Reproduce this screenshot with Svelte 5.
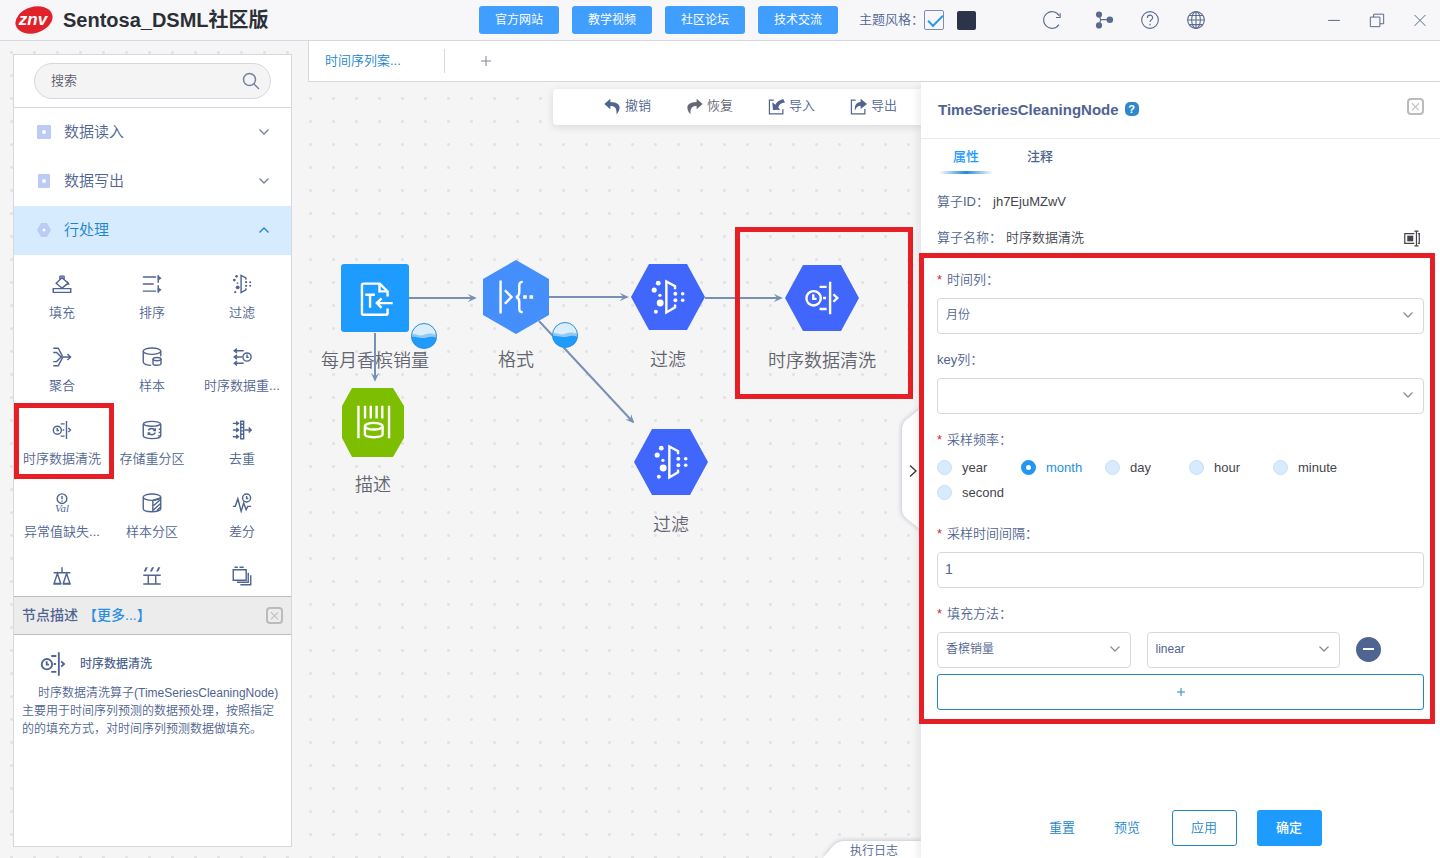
<script lang="ts">
  type GraphNode = { id: string; label: string; icon: string; shape: string; x: number; y: number };

  const links = ['官方网站', '教学视频', '社区论坛', '技术交流'];

  const tools = [
    { icon: 'fill', label: '填充' },
    { icon: 'sort', label: '排序' },
    { icon: 'filter', label: '过滤' },
    { icon: 'merge', label: '聚合' },
    { icon: 'sample', label: '样本' },
    { icon: 'resample', label: '时序数据重...' },
    { icon: 'clean', label: '时序数据清洗', marked: true },
    { icon: 'store', label: '存储重分区' },
    { icon: 'dedupe', label: '去重' },
    { icon: 'outlier', label: '异常值缺失...' },
    { icon: 'partition', label: '样本分区' },
    { icon: 'diff', label: '差分' },
    { icon: 'balance', label: '' },
    { icon: 'shuffle', label: '' },
    { icon: 'stack', label: '' }
  ];

  const actions = [
    { icon: 'undo', label: '撤销' },
    { icon: 'redo', label: '恢复' },
    { icon: 'import', label: '导入' },
    { icon: 'export', label: '导出' }
  ];

  // node centres on the canvas
  const nodes: GraphNode[] = [
    { id: 'src', label: '每月香槟销量', icon: 'text', shape: 'square', x: 67, y: 216 },
    { id: 'fmt', label: '格式', icon: 'format', shape: 'hexTall', x: 208, y: 215 },
    { id: 'flt1', label: '过滤', icon: 'filter', shape: 'hex', x: 360, y: 215 },
    { id: 'cln', label: '时序数据清洗', icon: 'clean', shape: 'hex', x: 514, y: 216 },
    { id: 'dsc', label: '描述', icon: 'describe', shape: 'oct', x: 65, y: 340 },
    { id: 'flt2', label: '过滤', icon: 'filter', shape: 'hex', x: 363, y: 380 }
  ];

  const shapes: Record<string, { color: string; d: string }> = {
    square: { color: '#1e9bff', d: 'M6 3h62a3 3 0 0 1 3 3v62a3 3 0 0 1-3 3H6a3 3 0 0 1-3-3V6a3 3 0 0 1 3-3z' },
    hexTall: { color: '#458ffc', d: 'M37 0L70 19V55L37 74L4 55V19z' },
    hex: { color: '#4166fb', d: 'M18 4H56L74 37L56 70H18L0 37z' },
    oct: { color: '#7dbe00', d: 'M16 3H57L68 21V53L57 72H16L6 53V21z' }
  };

  const edges = [
    'M101 216L167 216',
    'M241 215L319 215',
    'M397 216L473 216',
    'M67 251L67 298',
    'M231 239L325 340'
  ];

  const badges = [
    { x: 116, y: 254 },
    { x: 257, y: 253 }
  ];

  const frequencies = ['year', 'month', 'day', 'hour', 'minute', 'second'];

  let theme = $state(true);
  let search = $state('');
  let frequency = $state('month');
  let interval = $state('1');
</script>

{#snippet chevron(dir: string)}
  <svg class="chevron" viewBox="0 0 12 12" aria-hidden="true">
    <path d={dir === 'up' ? 'M1.500 8.500L6 4L10.500 8.500' : dir === 'right' ? 'M3 0.500L9 6L3 11.500' : 'M1.500 3.500L6 8L10.500 3.500'} />
  </svg>
{/snippet}

{#snippet icon(name: string)}
  <svg class="icon" viewBox="0 0 24 24" aria-hidden="true">
    {#if name === 'fill'}
      <path d="M1.500 17.500h21v4.500h-21zM5 11l7-6.500 7.500 6.500L12 17zM9 2.500h6M9.500 2.500V7M14.500 2.500v4" />
      <path class="solid" d="M18 8l3.500 5h-3.500z" />
    {:else if name === 'sort'}
      <path d="M1 3.500h16M1 12h13M1 20.500h16M19.500 1.500v9M19.500 13.500v9" />
      <path class="solid" d="M19 1.500l4.500 3.500-4.500 3zM19 16l4.500 3-4.500 3.500z" />
    {:else if name === 'filter'}
      <g class="solid">
        <circle cx="5.500" cy="2.800" r="1.600" />
        <circle cx="2.800" cy="7.300" r="1.700" />
        <circle cx="6.600" cy="10.900" r="1.100" />
        <circle cx="6.800" cy="16" r="2.300" />
        <circle cx="3.900" cy="21.800" r="1.300" />
        <circle cx="16.900" cy="9.800" r="1.300" />
        <circle cx="16.900" cy="14.200" r="1.300" />
        <circle cx="21.800" cy="9.800" r="1.200" />
        <circle cx="21.800" cy="14.200" r="1.200" />
      </g>
      <path d="M16.700 6.800V4.800L10.900 1.700V22.300L16.700 18.900V17" />
    {:else if name === 'merge'}
      <path d="M1.500 1.500h6L12.500 11M1.500 6.500h4L11 12M1.500 17.500h4L11 12M1.500 22.500h6L12.500 13M11 12h11M18.500 8.500L22.300 12l-3.800 3.500" />
    {:else if name === 'sample'}
      <ellipse cx="12" cy="5" rx="10.500" ry="3.800" />
      <path d="M1.500 5v13c0 2 4 4 9.500 4M22.500 5v6" />
      <ellipse cx="18" cy="14.500" rx="4.800" ry="1.900" />
      <path d="M13.200 14.500v5.500c0 2.600 9.600 2.600 9.600 0v-5.500" />
    {:else if name === 'resample'}
      <path d="M2 4.500h12M2 12h10M2 19.500h12M6 2L2.800 4.500 6 7M6 9.500L2.800 12 6 14.500M6 17L2.800 19.500 6 22" />
      <circle cx="18" cy="12" r="4.900" />
      <path d="M18 9v3.300h2" />
    {:else if name === 'clean'}
      <circle cx="6.400" cy="12.200" r="4.800" />
      <path d="M6.200 9.500v3.100h2.200M10.400 4.600h4.700M12.700 12h2M10.400 19.300h4.700M17.400 1.200v21.600M19.600 9.500L22.200 12l-2.600 2.500" />
    {:else if name === 'store'}
      <path d="M1.500 5c0-4.500 21-4.500 21 0v14c0 4.500-21 4.500-21 0zM2 5c2 3.200 17 3.200 20 0M20 11h2.500M20 15h2.500M19 19h3" />
      <path d="M7.500 12.500c1.500-3.200 6.500-3.200 8 0M16 15c-1.500 3.500-6.500 3.500-8 .5M16 10v2.500h-2.500M7.500 18v-2.500h2.500" />
    {:else if name === 'dedupe'}
      <path d="M1 4h6M1 12h6M1 20h6M15 12h8M5 1.800L7.800 4 5 6.200M5 9.800L7.800 12 5 14.200M5 17.800L7.800 20 5 22.200M20 9l3 3-3 3" />
      <path d="M10.500 1.500h3.500v21h-3.500zM10.500 5h3M10.500 9h3M10.500 13h3M10.500 17h3" />
    {:else if name === 'outlier'}
      <circle cx="12" cy="6.800" r="5.800" />
      <path d="M12 3.500v4M12 9v1.500" />
      <text x="12" y="23" text-anchor="middle">Val</text>
    {:else if name === 'partition'}
      <ellipse cx="12" cy="5" rx="10.500" ry="3.800" />
      <path d="M1.500 5v14c0 2 4 3.500 10.500 3.500S22.500 21 22.500 19V5M13 9v13.500M13 9l9-3M14 15l8-7M14 20l8-7M18 21l4-4" />
    {:else if name === 'diff'}
      <path d="M1 16h3l3-9 4 15 3-10 3 8 2-4h4" />
      <circle cx="17.500" cy="6" r="4.800" />
      <path d="M17.500 3.500v3h2" />
    {:else if name === 'balance'}
      <path d="M2 8h20M12 1.500v7M6.500 9L2.500 21h8zM17.500 9l-4 12h8zM1.500 21.500h9.500M13 21.500h9.500" />
    {:else if name === 'shuffle'}
      <path d="M1.500 11h21M1.500 21.500h21M7.500 11v10.500M16.500 11v10.500" />
      <path class="solid" d="M2 6.500l2.500-5h2.500l-2.500 5zM9.500 6.500l2.500-5h2.500l-2.500 5zM17 6.500l2.500-5h2.500l-2.500 5z" />
    {:else if name === 'stack'}
      <path d="M1.500 4.500h15.500v12.500h-15.500zM3 1.500h4M9 1.500h5M19.500 8v11.500H6M22.500 11v11.500H10" />
    {:else if name === 'text'}
      <path d="M20.400 19v3.200a1 1 0 0 1-1 1H4.300a1 1 0 0 1-1-1V3.400a1 1 0 0 1 1-1h10.900l5.200 5.200V11M15 2.800v4.800h5.200M5.500 9.800h6.400M8.700 9.800v8.700M13.500 15.400h10.300M16.400 12.200l-3.200 3.200 3.200 3.200" />
    {:else if name === 'format'}
      <path d="M1.700 1v22M4.600 7.500L9 12l-4.400 4.500M16.500 1.900c-2 0-2.300.8-2.300 2.500v4.400c0 1.800-.6 2.800-2.200 3.200 1.600.4 2.200 1.400 2.200 3.200v4.400c0 1.700.3 2.500 2.300 2.500" />
      <path class="solid" d="M16.800 10.800h2.400v2.400h-2.400zM21 10.800h2.400v2.400H21z" />
    {:else if name === 'describe'}
      <path d="M2.300 1.200v21.600M22.700 1.200v21.600M6.700 1.200v8.400M10.500 1.200v8.400M14.400 1.200v8.400M18.200 1.200v8.400M6.600 15v5.200c0 2.600 11.800 2.600 11.800 0V15" />
      <ellipse cx="12.500" cy="14.800" rx="5.900" ry="2.200" />
    {:else if name === 'undo'}
      <path class="solid" d="M9 1L0.500 8.500 9 16v-4.800c6.500 0 9.500 3.300 8.500 11.800C25 15 24 6 9 5.800z" />
    {:else if name === 'redo'}
      <path class="solid" d="M15 1l8.500 7.500L15 16v-4.800c-6.500 0-9.500 3.300-8.500 11.800C-1 15 0 6 15 5.800z" />
    {:else if name === 'import'}
      <path d="M8 3H2v19.500h19v-7" />
      <path class="solid" d="M6 6l1 11 10.500-.5-3-3c1-4 4-6.500 9.500-7l-2.500-5c-5.500 1.500-9.500 4-11 8z" />
    {:else if name === 'export'}
      <path d="M8 3H2v19.500h19v-7" />
      <path class="solid" d="M15 1l9 7.500-9 7v-4.500c-4 0-6.500 2-8 7C6 10.500 9 6 15 5.500z" />
    {:else if name === 'refresh'}
      <path d="M20.300 17.500A10 10 0 1 1 20.500 6.800M21.800 4v5h-5" />
    {:else if name === 'branch'}
      <path d="M6 5.500L8 12M6 18.500L8 12M8 11.500L20 11.500" />
      <g class="solid">
        <circle cx="6" cy="5.500" r="3.700" />
        <circle cx="6" cy="18.500" r="3.700" />
        <circle cx="19" cy="11.800" r="3.900" />
      </g>
    {:else if name === 'help'}
      <circle cx="12" cy="12" r="10" />
      <path d="M8.800 9.500c0-4.500 6.600-4.300 6.400-.2 0 2.400-3.200 2.600-3.200 5M12 16.500v2" />
    {:else if name === 'globe'}
      <circle cx="12" cy="12" r="10" />
      <ellipse cx="12" cy="12" rx="5.200" ry="10" />
      <path d="M12 2v20M2 12h20M3.500 6.500h17M3.500 17.500h17" />
    {:else if name === 'minimize'}
      <path d="M5 12.500h14" />
    {:else if name === 'restore'}
      <path d="M4 8.500h11.500V20H4zM8 8.500V5h12v11.500h-4.500" />
    {:else if name === 'close'}
      <path d="M5.500 6l13 13M18.500 6l-13 13" />
    {:else if name === 'rename'}
      <path d="M16 5H2.500v14H16M19 2v20M16 1.500h6M16 22.500h6M21 5h2v14h-2" />
      <path class="solid" d="M6 8h8.500v8H6z" />
    {/if}
  </svg>
{/snippet}

<div class="app">
  <header class="topbar">
    <div class="brand">
      <svg class="logo" viewBox="0 0 40 30" role="img" aria-label="znv">
        <ellipse cx="20" cy="15" rx="19" ry="13" transform="rotate(-17 20 15)" />
        <text x="19" y="20" text-anchor="middle">znv</text>
      </svg>
      <h1>Sentosa_DSML社区版</h1>
    </div>
    <nav class="links">
      {#each links as link}
        <a href="#top">{link}</a>
      {/each}
    </nav>
    <div class="theme">
      <label for="theme">主题风格：</label>
      <input id="theme" type="checkbox" bind:checked={theme} />
      <button class="swatch" aria-label="深色"></button>
    </div>
    <div class="icons">
      <button class="refresh" aria-label="刷新">{@render icon('refresh')}</button>
      <button aria-label="分支">{@render icon('branch')}</button>
      <button aria-label="帮助">{@render icon('help')}</button>
      <button aria-label="语言">{@render icon('globe')}</button>
    </div>
    <div class="window">
      <button aria-label="最小化">{@render icon('minimize')}</button>
      <button aria-label="还原">{@render icon('restore')}</button>
      <button aria-label="关闭">{@render icon('close')}</button>
    </div>
  </header>

  <div class="body">
    <aside class="sidebar">
      <div class="search">
        <input type="text" placeholder="搜索" aria-label="搜索" bind:value={search} />
        <svg viewBox="0 0 18 18" aria-hidden="true"><circle cx="7.500" cy="7.500" r="6" /><path d="M12 12l5 5" /></svg>
      </div>
      <div class="tree">
        <button class="category">
          <svg class="kind" viewBox="0 0 14 14" aria-hidden="true"><rect width="14" height="14" rx="1" /><circle cx="7" cy="7" r="2" /></svg>
          <span>数据读入</span>{@render chevron('down')}
        </button>
        <button class="category">
          <svg class="kind" viewBox="0 0 14 14" aria-hidden="true"><rect x="1" width="12" height="14" rx="1" /><circle cx="7" cy="7" r="2" /></svg>
          <span>数据写出</span>{@render chevron('down')}
        </button>
        <button class="category open">
          <svg class="kind" viewBox="0 0 14 14" aria-hidden="true"><path d="M4 0h6l4 7-4 7H4L0 7z" /><circle cx="7" cy="7" r="1.500" /></svg>
          <span>行处理</span>{@render chevron('up')}
        </button>
        <div class="tools">
          {#each tools as tool}
            <button class="tool" class:marked={tool.marked} aria-label={tool.label || tool.icon}>
              {@render icon(tool.icon)}
              {#if tool.label}<span>{tool.label}</span>{/if}
            </button>
          {/each}
        </div>
      </div>
      <section class="about">
        <header>
          <h2>节点描述</h2>
          <a href="#more">【更多...】</a>
          <button class="close" aria-label="关闭">{@render icon('close')}</button>
        </header>
        <div class="about-body">
          <h3>{@render icon('clean')}时序数据清洗</h3>
          <p>时序数据清洗算子(TimeSeriesCleaningNode)主要用于时间序列预测的数据预处理，按照指定的的填充方式，对时间序列预测数据做填充。</p>
        </div>
      </section>
    </aside>

    <main>
      <div class="tabbar">
        <button class="tab">时间序列案...</button>
        <button class="add-tab" aria-label="新建">
          <svg viewBox="0 0 12 12" aria-hidden="true"><path d="M6 1v10M1 6h10" /></svg>
        </button>
      </div>
      <div class="stage">
        <div class="canvas">
          <div class="actions">
            {#each actions as action}
              <button class={action.icon}>{@render icon(action.icon)}{action.label}</button>
            {/each}
          </div>

          {#each nodes as node (node.id)}
            <div class="node" style="left: {node.x}px; top: {node.y}px">
              <div class="shape">
                <svg viewBox="0 0 74 74" aria-hidden="true"><path d={shapes[node.shape].d} fill={shapes[node.shape].color} /></svg>
                {@render icon(node.icon)}
              </div>
              <span>{node.label}</span>
            </div>
          {/each}

          <svg class="edges" aria-hidden="true">
            <defs>
              <marker id="arrow" viewBox="0 0 10 10" refX="8" refY="5" markerWidth="9" markerHeight="9" markerUnits="userSpaceOnUse" orient="auto">
                <path d="M0 0.500L10 5L0 9.500L4 5z" fill="#7890b4" />
              </marker>
            </defs>
            {#each edges as d}
              <path {d} marker-end="url(#arrow)" />
            {/each}
          </svg>

          {#each badges as badge}
            <svg class="badge" style="left: {badge.x}px; top: {badge.y}px" viewBox="0 0 28 28" aria-hidden="true">
              <circle cx="14" cy="14" r="12.500" fill="#d9edfb" />
              <path d="M1.500 13c4-3 7 2 12 0s8-2 13 0v5h-25z" fill="#92c9f3" />
              <path d="M1.500 15c4-1 7 1 11 1s9-3 14 0c-.5 14-24.500 14-25-1z" fill="#1e9bff" />
              <circle cx="14" cy="14" r="12.500" fill="none" stroke="#2d8fd8" />
            </svg>
          {/each}

          <div class="highlight"></div>

          <button class="handle" aria-label="收起">
            <svg class="bump" viewBox="0 0 20 124" aria-hidden="true"><path d="M20 1L5 13Q1 17 1 22V102Q1 107 5 111L20 123z" /></svg>
            {@render chevron('right')}
          </button>
          <button class="log">
            <svg viewBox="0 0 98 18" aria-hidden="true"><path d="M0 18L10 6Q15 1 21 1H98V18z" /></svg>
            <span>执行日志</span>
          </button>
        </div>

        <section class="panel">
          <header>
            <h2>TimeSeriesCleaningNode</h2>
            <span class="hint">?</span>
            <button class="close" aria-label="关闭">{@render icon('close')}</button>
          </header>
          <div class="tabs">
            <button class="active">属性</button>
            <button>注释</button>
          </div>
          <div class="info"><span>算子ID：</span>jh7EjuMZwV</div>
          <div class="info">
            <span>算子名称：</span>时序数据清洗
            <button aria-label="重命名">{@render icon('rename')}</button>
          </div>

          <form class="params">
            <div class="field">
              <label class="required" for="time">时间列：</label>
              <div class="select"><select id="time"><option>月份</option></select>{@render chevron('down')}</div>
            </div>
            <div class="field">
              <label for="key">key列：</label>
              <div class="select"><select id="key"><option></option></select>{@render chevron('down')}</div>
            </div>
            <fieldset>
              <legend class="required">采样频率：</legend>
              <div class="radios">
                {#each frequencies as freq}
                  <label><input type="radio" name="frequency" value={freq} bind:group={frequency} />{freq}</label>
                {/each}
              </div>
            </fieldset>
            <div class="field">
              <label class="required" for="interval">采样时间间隔：</label>
              <input id="interval" type="text" bind:value={interval} />
            </div>
            <div class="field last">
              <label class="required" for="column">填充方法：</label>
              <div class="pair">
                <div class="select"><select id="column"><option>香槟销量</option></select>{@render chevron('down')}</div>
                <div class="select"><select aria-label="方法"><option>linear</option></select>{@render chevron('down')}</div>
                <div class="remove-cell"><button type="button" class="remove" aria-label="删除"></button></div>
              </div>
            </div>
            <button type="button" class="add" aria-label="添加">
              <svg viewBox="0 0 10 10" aria-hidden="true"><path d="M5 1v8M1 5h8" /></svg>
            </button>
          </form>

          <footer>
            <button>重置</button>
            <button>预览</button>
            <button class="outline">应用</button>
            <button class="primary">确定</button>
          </footer>
        </section>
      </div>
    </main>
  </div>
</div>

<style>
:global(body) {
  margin: 0;
}
.app, .app * {
  box-sizing: border-box;
}
.app {
  --ink: #4f6490;
  --blue: #1e9bff;
  --line: #d5d8de;
  --red: #e61e25;
  display: flex;
  flex-direction: column;
  height: 100vh;
  font: 350 13px/20px "Liberation Sans", "Noto Sans CJK SC", sans-serif;
  color: var(--ink);
  background: #f5f5f5;
}
button {
  padding: 0;
  border: 0;
  background: none;
  font: inherit;
  color: inherit;
  cursor: pointer;
}
a {
  text-decoration: none;
}
h1, h2, h3, p {
  margin: 0;
}
svg {
  display: block;
  flex: none;
}
.icon {
  width: 20px;
  height: 20px;
  fill: none;
  stroke: currentColor;
  stroke-width: 1.7;
}
.icon .solid {
  fill: currentColor;
  stroke: none;
}
.icon text {
  font: italic 400 13px "Liberation Serif", serif;
  fill: currentColor;
  stroke: none;
}
.chevron {
  width: 12px;
  height: 12px;
  fill: none;
  stroke: currentColor;
  stroke-width: 1.3;
}
.close {
  width: 17px;
  height: 17px;
  border: 2px solid #bdbabd;
  border-radius: 4px;
  color: #c3bfc2;
}
.close .icon {
  width: 13px;
  height: 13px;
  stroke-width: 2;
}

/* top bar */
.topbar {
  display: flex;
  align-items: center;
  height: 41px;
  flex: none;
  padding: 0 10px 0 14px;
  background: #f7f7fa;
  border-bottom: 1px solid var(--line);
}
.brand {
  display: flex;
  align-items: center;
  gap: 9px;
  flex: 1;
}
.logo {
  width: 40px;
  height: 30px;
  fill: #e0222b;
}
.logo text {
  font: italic 700 17px "Liberation Sans", sans-serif;
  fill: #fff;
}
h1 {
  font-size: 20px;
  font-weight: 700;
  line-height: 28px;
  color: #2c3036;
}
.links {
  display: flex;
  gap: 13px;
}
.links a {
  width: 80px;
  border-radius: 3px;
  background: #409eff;
  color: #fff;
  font-size: 12px;
  font-weight: 400;
  line-height: 28px;
  text-align: center;
}
.theme {
  display: flex;
  align-items: center;
  margin: 0 66px 0 21px;
}
.theme input {
  appearance: none;
  width: 20px;
  height: 20px;
  margin: 0;
  border: 1px solid #7d8db0;
  border-radius: 2px;
}
.theme input:checked::before {
  content: "";
  display: block;
  width: 13px;
  height: 6px;
  margin: 4px 0 0 3px;
  border: solid #2a9be8;
  border-width: 0 0 2px 2px;
  transform: rotate(-45deg);
}
.swatch {
  width: 19px;
  height: 19px;
  margin-left: 13px;
  border-radius: 2px;
  background: #2b3448;
}
.icons {
  display: flex;
  gap: 26px;
  color: #5a6a8c;
}
.icons .icon {
  stroke-width: 1.3;
}
.refresh {
  margin-right: 6px;
}
.window {
  display: flex;
  gap: 23px;
  margin-left: 118px;
  color: #5a6a8c;
}
.window .icon {
  stroke-width: 1.2;
}

.body {
  display: flex;
  gap: 16px;
  flex: 1;
  min-height: 0;
  background-image: radial-gradient(circle, #e2e2e2 1px, transparent 2px);
  background-size: 23px 23px;
}

/* sidebar */
.sidebar {
  display: flex;
  flex-direction: column;
  flex: 0 0 279px;
  margin: 13px 0 11px 13px;
  background: #fff;
  border: 1px solid var(--line);
}
.search {
  position: relative;
  padding: 8px 20px;
  border-bottom: 1px solid var(--line);
}
.search input {
  display: block;
  width: 100%;
  height: 36px;
  padding: 0 40px 2px 16px;
  border: 1px solid var(--line);
  border-radius: 18px;
  background: #f4f4f4;
  font: inherit;
  color: var(--ink);
}
.search input::placeholder {
  color: #5c5f72;
}
.search svg {
  position: absolute;
  right: 31px;
  top: 17px;
  width: 18px;
  height: 18px;
  fill: none;
  stroke: #7480a4;
  stroke-width: 1.5;
}
.tree {
  flex: 1;
  min-height: 0;
  overflow: hidden;
}
.category {
  display: flex;
  align-items: center;
  width: 100%;
  height: 49px;
  padding: 0 21px 2px 23px;
  font-size: 15px;
  text-align: left;
}
.category span {
  flex: 1;
  margin-left: 13px;
}
.category .chevron {
  color: #7380a0;
}
.category.open {
  background: #d7ebfe;
  color: #1a85cc;
}
.category.open .chevron {
  color: #1a85cc;
}
.kind {
  width: 14px;
  height: 14px;
  fill: #bccbf5;
}
.kind circle {
  fill: #fff;
}
.tools {
  display: grid;
  grid-template-columns: repeat(3, 1fr);
  padding: 10px 4px 0 3px;
}
.tool {
  position: relative;
  display: flex;
  flex-direction: column;
  align-items: center;
  gap: 9px;
  height: 73px;
  padding-top: 9px;
  white-space: nowrap;
}
.tool.marked::after {
  content: "";
  position: absolute;
  inset: -8px -7px 5px -3px;
  border: 5px solid var(--red);
}
.about header {
  display: flex;
  align-items: center;
  height: 39px;
  padding: 0 8px 1px;
  border: solid #bdbdbf;
  border-width: 1px 0;
  background: #ececec;
  font-size: 14px;
}
.about h2 {
  font-size: 14px;
  font-weight: 500;
}
.about a {
  margin-left: 5px;
  color: #2a8fe0;
  font-weight: 500;
}
.about .close {
  margin-left: auto;
}
.about-body {
  min-height: 211px;
  padding: 16px 9px 0 8px;
  font-size: 12px;
  line-height: 18px;
}
.about h3 {
  display: flex;
  align-items: center;
  gap: 13px;
  margin: 0 0 7px 17px;
  font-size: 12px;
  font-weight: 500;
}
.about h3 .icon {
  width: 28px;
  height: 26px;
}
.about p {
  text-indent: 16px;
}

/* workspace */
main {
  display: flex;
  flex-direction: column;
  flex: 1;
  min-width: 0;
}
.tabbar {
  display: flex;
  align-items: center;
  height: 41px;
  flex: none;
  background: #fff;
  border: solid var(--line);
  border-width: 0 0 1px 1px;
}
.tab {
  width: 136px;
  height: 24px;
  padding-left: 16px;
  border-right: 1px solid var(--line);
  color: #1a85cc;
  text-align: left;
}
.add-tab {
  margin-left: 35px;
}
.add-tab svg {
  width: 12px;
  height: 12px;
  stroke: #808591;
}
.stage {
  display: flex;
  flex: 1;
  min-height: 0;
}
.canvas {
  position: relative;
  flex: 1;
  min-width: 0;
  overflow: hidden;
}
.actions {
  position: absolute;
  top: 7px;
  right: 0;
  display: flex;
  gap: 35px;
  width: 368px;
  height: 36px;
  padding: 0 0 2px 51px;
  border-radius: 4px 0 0 4px;
  background: #fff;
  box-shadow: 0 2px 8px rgba(0, 0, 0, 0.12);
}
.actions button {
  display: flex;
  align-items: center;
  gap: 4px;
  flex: none;
}
.actions .icon {
  width: 17px;
  height: 17px;
}
.actions .redo {
  color: #666876;
}
.node {
  position: absolute;
  display: flex;
  flex-direction: column;
  align-items: center;
  width: 120px;
  margin: -37px 0 0 -60px;
}
.node span {
  margin-top: 14px;
  font-size: 18px;
  line-height: 24px;
  color: #62646f;
  white-space: nowrap;
}
.shape {
  display: grid;
  place-items: center;
  color: #fff;
}
.shape svg {
  grid-area: 1 / 1;
  width: 74px;
  height: 74px;
}
.shape .icon {
  width: 36px;
  height: 36px;
  stroke-width: 1.6;
}
.edges {
  position: absolute;
  inset: 0;
  width: 100%;
  height: 100%;
  fill: none;
  stroke: #7890b4;
  stroke-width: 2;
  pointer-events: none;
}
.edges marker path {
  stroke: none;
}
.badge {
  position: absolute;
  width: 28px;
  height: 28px;
  margin: -14px 0 0 -14px;
}
.highlight {
  position: absolute;
  left: 427px;
  top: 145px;
  width: 178px;
  height: 172px;
  border: 5px solid var(--red);
}
.handle {
  position: absolute;
  right: 0;
  top: 325px;
  display: grid;
  align-items: center;
  justify-items: end;
  color: #333;
}
.handle .bump {
  grid-area: 1 / 1;
  width: 20px;
  height: 124px;
  fill: #fff;
  filter: drop-shadow(-1px 0 2px rgba(60, 60, 120, 0.25));
}
.handle .chevron {
  grid-area: 1 / 1;
  position: relative;
  margin: 4px 2px 0 0;
}
.log {
  position: absolute;
  right: 0;
  bottom: 0;
  display: grid;
  font-size: 12px;
  line-height: 18px;
}
.log > * {
  grid-area: 1 / 1;
}
.log svg {
  align-self: end;
  width: 98px;
  height: 18px;
  fill: #fff;
  filter: drop-shadow(0 -1px 2px rgba(60, 60, 120, 0.25));
}
.log span {
  position: relative;
  height: 18px;
  padding: 2px 0 0 4px;
}

/* node settings */
.panel {
  position: relative;
  display: flex;
  flex-direction: column;
  flex: 0 0 519px;
  background: #fff;
  box-shadow: -3px 4px 8px rgba(0, 0, 0, 0.08);
}
.panel header {
  display: flex;
  align-items: center;
  height: 57px;
  flex: none;
  padding: 0 16px 0 17px;
  border-bottom: 1px solid #e9eaed;
}
.panel h2 {
  font-size: 15px;
  font-weight: 700;
}
.panel header .close {
  margin: 0 0 7px auto;
}
.hint {
  width: 14px;
  height: 14px;
  margin: 0 0 2px 6px;
  border-radius: 5px;
  background: #2f87cc;
  color: #fff;
  font-size: 11px;
  font-weight: 700;
  line-height: 14px;
  text-align: center;
}
.tabs {
  display: flex;
  gap: 20px;
  height: 45px;
  flex: none;
  padding-left: 18px;
}
.tabs button {
  width: 54px;
  height: 35px;
  font-weight: 500;
}
.tabs .active {
  color: var(--blue);
  background: linear-gradient(90deg, transparent, #2389d3, transparent) bottom / 100% 3px no-repeat;
}
.info {
  display: flex;
  align-items: center;
  gap: 4px;
  height: 36px;
  padding: 0 20px 0 16px;
  color: #43454c;
}
.info span {
  color: var(--ink);
}
.info button {
  margin-left: auto;
}
.info .icon {
  width: 17px;
  height: 17px;
}
.params {
  margin: -3px 5px 0 -2px;
  padding: 12px 6px 9px 13px;
  border: 5px solid var(--red);
}
.field {
  display: flex;
  flex-direction: column;
  gap: 8px;
  margin-bottom: 16px;
}
.field.last {
  margin-bottom: 6px;
}
.required::before {
  content: "*";
  margin-right: 5px;
  color: #d8262c;
}
.select {
  position: relative;
  flex: 1;
}
.select .chevron {
  position: absolute;
  right: 10px;
  top: 11px;
  color: #8b8e96;
  pointer-events: none;
}
select, .field > input {
  appearance: none;
  display: block;
  width: 100%;
  height: 36px;
  padding: 0 8px 2px;
  border: 1px solid var(--line);
  border-radius: 4px;
  background: #fff;
  font: inherit;
  font-size: 12px;
  color: var(--ink);
}
.field > input {
  padding: 0 7px 2px;
  font-size: 14px;
}
fieldset {
  margin: 0 0 19px;
  padding: 0;
  border: 0;
}
legend {
  padding: 0;
}
.radios {
  display: flex;
  flex-wrap: wrap;
  padding-top: 5px;
}
.radios label {
  display: flex;
  align-items: center;
  gap: 10px;
  width: 84px;
  height: 25px;
  color: #43454c;
}
.radios input {
  appearance: none;
  width: 15px;
  height: 15px;
  margin: 0;
  border: 1px solid #c9dff2;
  border-radius: 50%;
  background: #d7ebfe;
}
.radios input:checked {
  border: 5px solid #2196f3;
  background: #fff;
}
.radios label:has(:checked) {
  color: #2490e0;
}
.pair {
  display: flex;
  gap: 16px;
}
.remove-cell {
  display: flex;
  align-items: center;
  width: 68px;
}
.remove {
  display: grid;
  place-items: center;
  width: 25px;
  height: 25px;
  margin-bottom: 2px;
  border-radius: 50%;
  background: var(--ink);
}
.remove::before {
  content: "";
  width: 11px;
  height: 2px;
  background: #fff;
}
.add {
  display: grid;
  place-items: center;
  width: 100%;
  height: 36px;
  border: 1px solid #2387c4;
  border-radius: 3px;
}
.add svg {
  width: 10px;
  height: 10px;
  stroke: #2387c4;
}
footer {
  display: flex;
  justify-content: center;
  margin-top: auto;
  padding: 0 10px 12px 0;
}
footer button {
  width: 65px;
  height: 36px;
  color: #1a85cc;
}
footer .outline {
  margin: 0 20px 0 12px;
  border: 1px solid #2387c4;
  border-radius: 3px;
}
footer .primary {
  border-radius: 3px;
  background: var(--blue);
  color: #fff;
  font-weight: 500;
}
</style>
